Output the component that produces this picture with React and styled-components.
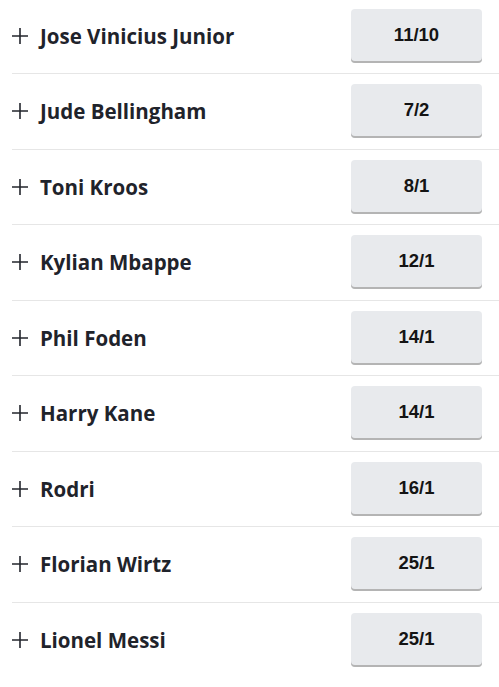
import React from "react";
import styled, { createGlobalStyle } from "styled-components";

const Global = createGlobalStyle`
  html, body { margin: 0; padding: 0; background: #ffffff; }
  body { font-family: "Open Sans", "Liberation Sans", sans-serif; }
`;

const List = styled.div`
  padding-left: 12px;
  margin-top: -1.5px;
`;

const Row = styled.div`
  box-sizing: border-box;
  height: 75.5px;
  display: flex;
  align-items: center;
  border-bottom: ${(p) => (p.$last ? "none" : "1px solid #e6e6e6")};
`;

const Name = styled.div`
  flex: 1;
  display: flex;
  align-items: center;
  gap: 11px;
  margin-left: -1px;
  font-family: "Open Sans", sans-serif;
  font-weight: 700;
  font-size: 20.5px;
  color: #1f232b;
`;

const Odds = styled.button`
  box-sizing: border-box;
  width: 131px;
  height: 54px;
  margin-right: 17px;
  border: none;
  border-radius: 4px;
  background: #e8eaed;
  box-shadow: inset 0 -2px 0 #b4b4b4;
  padding: 0 0 2px;
  font-family: "Liberation Sans", Arial, sans-serif;
  font-weight: 700;
  font-size: 18.5px;
  color: #141414;
  cursor: pointer;
`;

const Plus = () => (
  <svg width="18" height="18" viewBox="0 0 18 18" aria-hidden="true">
    <path d="M9 1v16M1 9h16" stroke="#23262d" strokeWidth="1.6" fill="none" />
  </svg>
);

const rows = [
  ["Jose Vinicius Junior", "11/10"],
  ["Jude Bellingham", "7/2"],
  ["Toni Kroos", "8/1"],
  ["Kylian Mbappe", "12/1"],
  ["Phil Foden", "14/1"],
  ["Harry Kane", "14/1"],
  ["Rodri", "16/1"],
  ["Florian Wirtz", "25/1"],
  ["Lionel Messi", "25/1"],
];

export default function App() {
  return (
    <>
      <Global />
      <List>
        {rows.map(([n, o], i) => (
          <Row key={n} $last={i === rows.length - 1}>
            <Name>
              <Plus />
              {n}
            </Name>
            <Odds>{o}</Odds>
          </Row>
        ))}
      </List>
    </>
  );
}
